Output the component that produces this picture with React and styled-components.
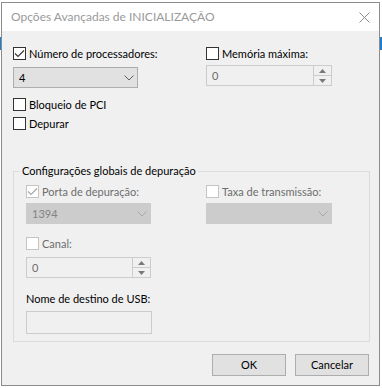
import React from 'react';
import styled, { createGlobalStyle } from 'styled-components';

const FONT = `"Lato", "Noto Sans", sans-serif`;

const GlobalStyle = createGlobalStyle`
  html, body { margin: 0; padding: 0; }
  body {
    width: 382px;
    height: 388px;
    overflow: hidden;
    font-family: ${FONT};
    font-size: 11px;
    background: linear-gradient(to bottom, #ffffff 0, #ffffff 37px, #1a7fd4 37px, #1a7fd4 50px, #ffffff 50px);
  }
  * { box-sizing: border-box; }
`;

const Page = styled.div`
  padding: 2px 0 0 1px;
`;

const Window = styled.div`
  width: 379px;
  height: 384px;
  border: 1px solid #8c8c8c;
  background: #f0f0f0;
  display: flex;
  flex-direction: column;
`;

const TitleBar = styled.div`
  height: 28px;
  flex: none;
  background: #ffffff;
  display: flex;
  align-items: center;
  justify-content: space-between;
  padding: 0 0 0 9px;
`;

const Title = styled.span`
  color: #9a9a9a;
  font-size: 12px;
  line-height: 16px;
`;

const Close = styled.div`
  width: 30px;
  height: 28px;
  display: flex;
  align-items: center;
  justify-content: center;
`;

const Body = styled.div`
  flex: 1;
  display: flex;
  flex-direction: column;
  padding: 16px 9px 0 11px;
`;

const TwoCols = styled.div`
  display: grid;
  grid-template-columns: ${p => p.$first}px 1fr;
  align-items: start;
`;

const Column = styled.div`
  display: flex;
  flex-direction: column;
`;

const CheckRow = styled.div`
  display: flex;
  align-items: center;
  gap: 3px;
  height: 13px;
  margin-top: ${p => p.$mt || 0}px;
  color: ${p => (p.$disabled ? '#6d6d6d' : '#000000')};
  white-space: nowrap;
`;

const Box = styled.span`
  width: 13px;
  height: 13px;
  flex: none;
  border: 1px solid ${p => (p.$disabled ? '#c4c4c4' : '#333333')};
  background: #ffffff;
  display: flex;
  align-items: center;
  justify-content: center;
`;

const LabelText = styled.span`
  line-height: 13px;
`;

const Combo = styled.div`
  width: ${p => p.$w}px;
  height: 21px;
  margin-top: ${p => p.$mt || 0}px;
  border: 1px solid ${p => (p.$disabled ? '#cccccc' : '#adadad')};
  background: ${p => (p.$disabled ? '#cccccc' : '#e1e1e1')};
  color: ${p => (p.$disabled ? '#838383' : '#000000')};
  display: flex;
  align-items: center;
  justify-content: space-between;
  padding: 0 3px 0 5px;
  line-height: 14px;
`;

const Spin = styled.div`
  width: ${p => p.$w}px;
  height: 21px;
  margin-top: ${p => p.$mt || 0}px;
  border: 1px solid #cccccc;
  background: #f0f0f0;
  display: flex;
`;

const SpinValue = styled.div`
  flex: 1;
  display: flex;
  align-items: center;
  padding-left: 5px;
  color: #6d6d6d;
  line-height: 14px;
`;

const SpinButtons = styled.div`
  width: 18px;
  display: flex;
  flex-direction: column;
  border-left: 1px solid #cccccc;
`;

const SpinBtn = styled.div`
  flex: 1;
  display: flex;
  align-items: center;
  justify-content: center;
  border-bottom: ${p => (p.$top ? '1px solid #cccccc' : 'none')};
`;

const GroupBox = styled.fieldset`
  margin: 34px 0 0 0;
  padding: 0 0 7px 12px;
  border: 1px solid #dcdcdc;
  width: 357px;
  min-width: 0;
`;

const Legend = styled.legend`
  margin-left: -6px;
  padding: 0 2px;
  line-height: 14px;
  color: #000000;
`;

const GroupInner = styled.div`
  display: flex;
  flex-direction: column;
  padding-top: 7px;
`;

const PlainLabel = styled.div`
  margin-top: ${p => p.$mt || 0}px;
  line-height: 16px;
  color: #000000;
`;

const TextBox = styled.div`
  width: 126px;
  height: 23px;
  margin-top: 4px;
  border: 1px solid #cccccc;
  background: #f0f0f0;
`;

const ButtonRow = styled.div`
  display: flex;
  justify-content: flex-end;
  gap: 9px;
  margin-top: 12px;
  padding-right: 1px;
`;

const Button = styled.button`
  width: 74px;
  height: 22px;
  padding: 0;
  border: 1px solid #adadad;
  background: #e1e1e1;
  color: #000000;
  font-family: ${FONT};
  font-size: 11px;
  line-height: 14px;
`;

const Chevron = ({ disabled }) => (
  <svg width="10" height="6" viewBox="0 0 10 6">
    <path d="M0.5 0.5 L5 5 L9.5 0.5" fill="none" stroke={disabled ? '#a8a8a8' : '#606060'} strokeWidth="1" />
  </svg>
);

const Arrow = ({ up }) => (
  <svg width="7" height="4" viewBox="0 0 7 4">
    <polygon points={up ? '0,4 7,4 3.5,0' : '0,0 7,0 3.5,4'} fill="#7a7a7a" />
  </svg>
);

const CheckBox = ({ checked, disabled, label, mt }) => (
  <CheckRow $disabled={disabled} $mt={mt}>
    <Box $disabled={disabled}>
      {checked && (
        <svg width="11" height="11" viewBox="0 0 11 11">
          <path d="M1 5.5 L4 8.5 L10 2.5" fill="none" stroke={disabled ? '#a6a6a6' : '#333333'} strokeWidth="1.1" />
        </svg>
      )}
    </Box>
    <LabelText>{label}</LabelText>
  </CheckRow>
);

const SpinBox = ({ value, w, mt }) => (
  <Spin $w={w} $mt={mt}>
    <SpinValue>{value}</SpinValue>
    <SpinButtons>
      <SpinBtn $top><Arrow up /></SpinBtn>
      <SpinBtn><Arrow /></SpinBtn>
    </SpinButtons>
  </Spin>
);

export default function App() {
  return (
    <Page>
      <GlobalStyle />
      <Window>
        <TitleBar>
          <Title>Opções Avançadas de INICIALIZAÇÃO</Title>
          <Close>
            <svg width="11" height="11" viewBox="0 0 11 11">
              <path d="M0.5 0.5 L10.5 10.5 M10.5 0.5 L0.5 10.5" stroke="#8a8a8a" strokeWidth="1" />
            </svg>
          </Close>
        </TitleBar>
        <Body>
          <TwoCols $first={193}>
            <Column>
              <CheckBox checked label="Número de processadores:" />
              <Combo $w={125} $mt={7}>
                <span>4</span>
                <Chevron />
              </Combo>
              <CheckBox label="Bloqueio de PCI" mt={10} />
              <CheckBox label="Depurar" mt={6} />
            </Column>
            <Column>
              <CheckBox label="Memória máxima:" />
              <SpinBox value="0" w={126} mt={5} />
            </Column>
          </TwoCols>

          <GroupBox>
            <Legend>Configurações globais de depuração</Legend>
            <GroupInner>
              <TwoCols $first={180}>
                <Column>
                  <CheckBox checked disabled label="Porta de depuração:" />
                  <Combo $w={125} $mt={5} $disabled>
                    <span>1394</span>
                    <Chevron disabled />
                  </Combo>
                </Column>
                <Column>
                  <CheckBox disabled label="Taxa de transmissão:" />
                  <Combo $w={126} $mt={5} $disabled>
                    <span></span>
                    <Chevron disabled />
                  </Combo>
                </Column>
              </TwoCols>
              <CheckBox disabled label="Canal:" mt={13} />
              <SpinBox value="0" w={125} mt={7} />
              <PlainLabel $mt={13}>Nome de destino de USB:</PlainLabel>
              <TextBox />
            </GroupInner>
          </GroupBox>

          <ButtonRow>
            <Button>OK</Button>
            <Button>Cancelar</Button>
          </ButtonRow>
        </Body>
      </Window>
    </Page>
  );
}
